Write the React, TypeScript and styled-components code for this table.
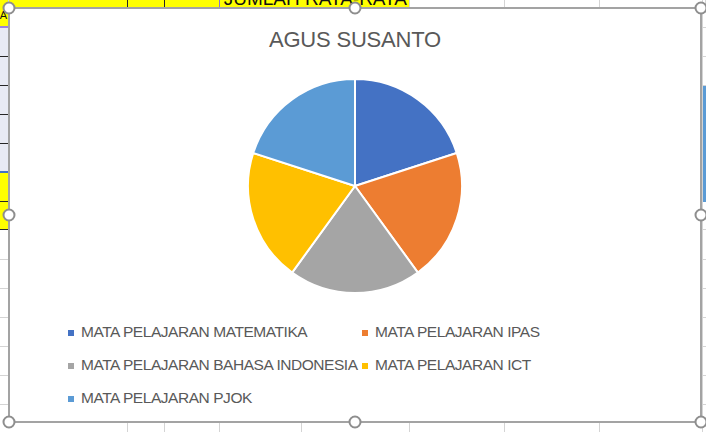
import React from "react";
import styled, { createGlobalStyle } from "styled-components";

const Global = createGlobalStyle`
  html, body { margin: 0; padding: 0; background: #fff; }
  body { width: 706px; height: 432px; overflow: hidden; font-family: "Liberation Sans", Arial, sans-serif; }
`;

const Page = styled.div`
  position: relative;
  width: 706px;
  height: 432px;
  overflow: hidden;
  background: #fff;
`;

/* ---------- spreadsheet behind the chart ---------- */
const COLS = [9, 119, 37, 55, 82, 108, 95, 95, 103, 3];
const ROWS = [8, 20, 29, 29, 29, 29, 29, 29, 28, 30, 29, 29, 29, 29, 29, 29, 29];

const YELLOW = "#ffff00";
const LAVENDER = "#e8eaf4";
const GRID = "#d4d4d4";
const DARK = "#262626";

const Sheet = styled.div`
  display: grid;
  grid-template-columns: ${COLS.map((c) => `${c}px`).join(" ")};
  grid-template-rows: ${ROWS.map((r) => `${r}px`).join(" ")};
`;

const Cell = styled.div<{ $bg: string; $right: string; $bottom: string; $bw: number; $span: number }>`
  box-sizing: border-box;
  grid-column: span ${(p) => p.$span};
  background: ${(p) => p.$bg};
  border-right: ${(p) => (p.$right === "none" ? "none" : `1px solid ${p.$right}`)};
  border-bottom: ${(p) => (p.$bottom === "none" ? "none" : `${p.$bw}px solid ${p.$bottom}`)};
  overflow: hidden;
  display: flex;
  align-items: flex-end;
  justify-content: flex-end;
  color: #111;
  font-family: "Liberation Sans", Arial, sans-serif;
`;

const CellText = styled.span<{ $size: number; $shift: number }>`
  font-size: ${(p) => p.$size}px;
  line-height: 1;
  white-space: nowrap;
  margin-bottom: ${(p) => p.$shift}px;
  padding: 0 2px;
`;

type CellDef = { bg: string; right: string; bottom: string; bw: number; span: number; text?: string; size?: number; shift?: number };

function cellFor(r: number, c: number): CellDef {
  const d: CellDef = { bg: "#fff", right: GRID, bottom: GRID, bw: 1, span: 1 };
  if (r === 0) {
    d.bottom = "none";
    if (c <= 3) d.bg = YELLOW;
    if (c === 1 || c === 2) d.right = DARK;
    if (c === 3) d.right = "#8a6fd6";
    if (c === 4) {
      d.bg = YELLOW;
      d.span = 2;
      d.text = "JUMLAH RATA-RATA";
      d.size = 19;
      d.shift = 0;
    }
    return d;
  }
  if (c === 0) {
    if (r === 1) {
      d.bg = YELLOW;
      d.bottom = "#9b82dc";
      d.bw = 2;
      d.text = "A";
      d.size = 11;
      d.shift = 5;
    } else if (r >= 2 && r <= 6) {
      d.bg = LAVENDER;
      d.bottom = r === 6 ? "#4472c4" : DARK;
      d.bw = r === 6 ? 2 : 1;
    } else if (r === 7 || r === 8) {
      d.bg = YELLOW;
      d.bottom = DARK;
    }
    d.right = "none";
    return d;
  }
  if (c === 9) {
    d.right = "none";
    if (r >= 4 && r <= 7) {
      d.bg = "#5b9bd5";
      d.bottom = "#5b9bd5";
    }
  }
  return d;
}

const SheetGrid: React.FC = () => {
  const cells: React.ReactNode[] = [];
  ROWS.forEach((_, r) => {
    let c = 0;
    while (c < COLS.length) {
      const d = cellFor(r, c);
      cells.push(
        <Cell key={`${r}-${c}`} $bg={d.bg} $right={d.right} $bottom={d.bottom} $bw={d.bw} $span={d.span}>
          {d.text && (
            <CellText $size={d.size ?? 12} $shift={d.shift ?? 0}>
              {d.text}
            </CellText>
          )}
        </Cell>
      );
      c += d.span;
    }
  });
  return <Sheet>{cells}</Sheet>;
};

/* ---------- the chart ---------- */
const ChartFrame = styled.div`
  position: absolute;
  left: 8px;
  top: 7px;
  width: 694px;
  height: 416px;
  box-sizing: border-box;
  border: 2px solid #a3a3a3;
  background: #fff;
  display: flex;
  flex-direction: column;
  align-items: center;
`;

const Title = styled.div`
  margin-top: 18px;
  font-family: "Liberation Sans", Arial, sans-serif;
  font-size: 22px;
  line-height: 26px;
  color: #595959;
  letter-spacing: -0.2px;
`;

const PieSvg = styled.svg`
  display: block;
  margin-top: 25px;
`;

const Legend = styled.div`
  align-self: flex-start;
  margin-left: 58px;
  margin-top: 21px;
  display: grid;
  grid-template-columns: 294px auto;
`;

const LegendItem = styled.div`
  display: flex;
  align-items: center;
  height: 33px;
  gap: 7px;
`;

const Marker = styled.span<{ $color: string }>`
  width: 6px;
  height: 6px;
  background: ${(p) => p.$color};
  margin-top: 2px;
  flex: none;
`;

const LegendLabel = styled.span`
  font-family: "Liberation Sans", Arial, sans-serif;
  font-size: 15.5px;
  line-height: 33px;
  letter-spacing: -0.45px;
  color: #595959;
  white-space: nowrap;
`;

const HandleLayer = styled.div`
  position: absolute;
  inset: -1px;
  pointer-events: none;
`;

const Handle = styled.span<{ $x: number; $y: number }>`
  position: absolute;
  left: ${(p) => p.$x}%;
  top: ${(p) => p.$y}%;
  width: 13px;
  height: 13px;
  box-sizing: border-box;
  border: 2px solid #8e8e8e;
  border-radius: 50%;
  background: #fff;
  transform: translate(-50%, -50%);
`;

const SERIES = [
  { label: "MATA PELAJARAN MATEMATIKA", color: "#4472c4" },
  { label: "MATA PELAJARAN IPAS", color: "#ed7d31" },
  { label: "MATA PELAJARAN BAHASA INDONESIA", color: "#a5a5a5" },
  { label: "MATA PELAJARAN ICT", color: "#ffc000" },
  { label: "MATA PELAJARAN PJOK", color: "#5b9bd5" },
];

const Pie: React.FC = () => {
  const size = 216;
  const cx = size / 2;
  const cy = size / 2;
  const r = 107;
  const n = SERIES.length;
  const pt = (deg: number) => {
    const a = (deg * Math.PI) / 180;
    return [cx + r * Math.sin(a), cy - r * Math.cos(a)];
  };
  return (
    <PieSvg width={size} height={size} viewBox={`0 0 ${size} ${size}`}>
      {SERIES.map((s, i) => {
        const [x1, y1] = pt((360 / n) * i);
        const [x2, y2] = pt((360 / n) * (i + 1));
        const d = `M${cx},${cy} L${x1.toFixed(2)},${y1.toFixed(2)} A${r},${r} 0 0 1 ${x2.toFixed(2)},${y2.toFixed(2)} Z`;
        return <path key={s.label} d={d} fill={s.color} stroke="#fff" strokeWidth={2} strokeLinejoin="round" />;
      })}
    </PieSvg>
  );
};

const HANDLES: Array<[number, number]> = [
  [0, 0], [50, 0], [100, 0],
  [0, 50], [100, 50],
  [0, 100], [50, 100], [100, 100],
];

export default function App() {
  return (
    <Page>
      <Global />
      <SheetGrid />
      <ChartFrame>
        <Title>AGUS SUSANTO</Title>
        <Pie />
        <Legend>
          {SERIES.map((s) => (
            <LegendItem key={s.label}>
              <Marker $color={s.color} />
              <LegendLabel>{s.label}</LegendLabel>
            </LegendItem>
          ))}
        </Legend>
        <HandleLayer>
          {HANDLES.map(([x, y]) => (
            <Handle key={`${x}-${y}`} $x={x} $y={y} />
          ))}
        </HandleLayer>
      </ChartFrame>
    </Page>
  );
}
